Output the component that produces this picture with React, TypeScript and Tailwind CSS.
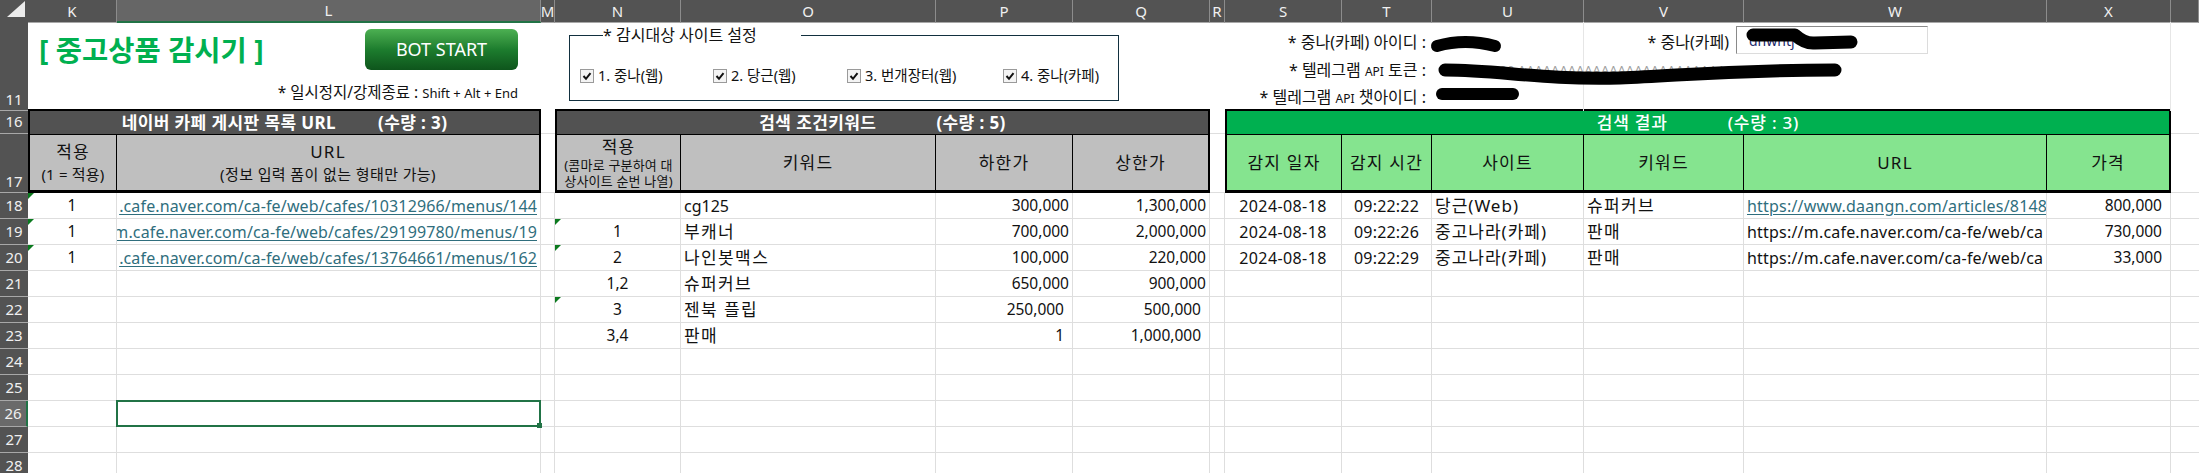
import type { ReactNode } from 'react'

const GRID =
  'grid grid-cols-[28px_89px_424px_14px_126px_255px_137px_137px_15px_117px_90px_152px_160px_303px_124px_28px]'

const COLS = ['K', 'L', 'M', 'N', 'O', 'P', 'Q', 'R', 'S', 'T', 'U', 'V', 'W', 'X', '']

const RIGHT_ROWS = [
  { n: '', kw: 'cg125', low: '300,000', high: '1,300,000', inset: false },
  { n: '1', kw: '부캐너', low: '700,000', high: '2,000,000', inset: false, mark: true },
  { n: '2', kw: '나인봇맥스', low: '100,000', high: '220,000', inset: false, mark: true },
  { n: '1,2', kw: '슈퍼커브', low: '650,000', high: '900,000', inset: false },
  { n: '3', kw: '젠북 플립', low: '250,000', high: '500,000', inset: true, mark: true },
  { n: '3,4', kw: '판매', low: '1', high: '1,000,000', inset: true },
]

// only the part the narrow columns show
const URLS = [
  '.cafe.naver.com/ca-fe/web/cafes/10312966/menus/144',
  'm.cafe.naver.com/ca-fe/web/cafes/29199780/menus/19',
  '.cafe.naver.com/ca-fe/web/cafes/13764661/menus/162',
]

const RESULTS = [
  { date: '2024-08-18', time: '09:22:22', site: '당근(Web)', kw: '슈퍼커브', url: 'https://www.daangn.com/articles/8148', price: '800,000', link: true },
  { date: '2024-08-18', time: '09:22:26', site: '중고나라(카페)', kw: '판매', url: 'https://m.cafe.naver.com/ca-fe/web/ca', price: '730,000', link: false },
  { date: '2024-08-18', time: '09:22:29', site: '중고나라(카페)', kw: '판매', url: 'https://m.cafe.naver.com/ca-fe/web/ca', price: '33,000', link: false },
]

const SITES = [
  { label: '1. 중나(웹)', width: 'w-[133px]' },
  { label: '2. 당근(웹)', width: 'w-[134px]' },
  { label: '3. 번개장터(웹)', width: 'w-[156px]' },
  { label: '4. 중나(카페)', width: 'w-[115px]' },
]

function RowHead({ label, active, bottom }: { label: string; active?: boolean; bottom?: boolean }) {
  return (
    <div
      className={`flex justify-center pb-px text-[15px] leading-5 text-[#f0f0f0] border-b border-[#a8a8a8] ${bottom ? 'items-end' : 'items-center'} ${active ? 'bg-[#6a6a6a] border-r-2 border-r-[#217346]' : 'bg-[#535353]'}`}
    >
      {label}
    </div>
  )
}

function Cell({ children, className = '' }: { children?: ReactNode; className?: string }) {
  return (
    <div className={`relative flex items-center min-w-0 overflow-hidden whitespace-nowrap border-r border-b border-[#dedede] text-[15.5px] text-[#111] ${className}`}>
      {children}
    </div>
  )
}

function Mark() {
  return <span className="absolute left-0 top-0 w-0 h-0 border-t-[6px] border-r-[6px] border-t-[#0b7a1e] border-r-transparent" />
}

function Title({ left, right, gap, className = '' }: { left: string; right: string; gap: string; className?: string }) {
  return (
    <div className={`flex items-center justify-center text-[17px] leading-[23px] text-white ${gap} ${className}`}>
      <span>{left}</span>
      <span>{right}</span>
    </div>
  )
}

function HeadCell({ children, tone, className = '' }: { children: ReactNode; tone: 'gray' | 'green'; className?: string }) {
  return (
    <div
      className={`flex flex-col items-center justify-center text-center text-[17px] tracking-[1.2px] leading-[22px] text-[#111] border-r border-black border-t border-b-[3px] border-b-black ${tone === 'gray' ? 'bg-[#bfbfbf]' : 'bg-[#85e48f]'} ${className}`}
    >
      {children}
    </div>
  )
}

function Checkbox() {
  return (
    <span className="flex items-center justify-center w-[14px] h-[14px] border border-[#9a9a9a] bg-[#f4f4f4] shrink-0">
      <svg viewBox="0 0 10 10" className="w-[10px] h-[10px]">
        <path d="M1.5 5 L4 7.8 L8.5 2.2" fill="none" stroke="#111" strokeWidth="2" />
      </svg>
    </span>
  )
}

export default function App() {
  const rows = Array.from({ length: 11 }, (_, i) => i)

  return (
    <div className="h-[473px] w-[2199px] overflow-hidden bg-white font-['Noto_Sans','Noto_Sans_CJK_KR',sans-serif]">
      {/* column letters */}
      <div className={`${GRID} h-[22px]`}>
        <div className="bg-[#535353] border-b border-[#a8a8a8] flex items-center justify-center">
          <svg viewBox="0 0 28 22" className="w-[28px] h-[22px]">
            <polygon points="7,17 25,17 25,1" fill="#ececec" />
          </svg>
        </div>
        {COLS.map((c, i) => (
          <div
            key={i}
            className={`flex items-center justify-center text-[15px] leading-none text-[#f0f0f0] border-r border-[#8c8c8c] ${c === 'L' ? 'bg-[#666666] border-b-2 border-b-[#217346]' : 'bg-[#535353] border-b border-b-[#a8a8a8]'}`}
          >
            {c}
          </div>
        ))}
      </div>

      {/* row 11: shapes and settings */}
      <div className={`${GRID} relative h-[87px]`}>
        <RowHead label="11" bottom />
        <div className="col-span-2 flex flex-col pl-[11px] pr-[23px]">
          <div className="flex items-center justify-between pt-[7px]">
            <span className="text-[28.5px] leading-[40px] font-bold text-[#00b050]">[ 중고상품 감시기 ]</span>
            <button className="w-[153px] h-[41px] rounded-[6px] bg-gradient-to-b from-[#4cb052] via-[#1d7d2e] to-[#0e551c] text-[18px] text-white">
              BOT START
            </button>
          </div>
          <div className="mt-[12px] text-right text-[15.5px] leading-5 text-[#111]">
            * 일시정지/강제종료 : <span className="text-[13px]">Shift + Alt + End</span>
          </div>
        </div>
        <div />
        <div className="col-span-4 pl-[14px] pt-[2px]">
          <fieldset className="w-[549px] h-[77px] border border-[#12303f]">
            <legend className="ml-[33px] w-[198px] text-[16px] leading-[22px] text-[#111]">* 감시대상 사이트 설정</legend>
            <div className="flex items-center pl-[10px] pt-[19px]">
              {SITES.map(site => (
                <div key={site.label} className={`flex items-center gap-[4px] text-[14.5px] text-[#111] ${site.width}`}>
                  <Checkbox />
                  <span>{site.label}</span>
                </div>
              ))}
            </div>
          </fieldset>
        </div>
        <div />
        <div className="col-span-2 flex flex-col items-end pt-[8px] pr-[6px] text-[16px] text-[#111]">
          <div className="leading-6">* 중나(카페) 아이디 :</div>
          <div className="mt-[4px] leading-6">* 텔레그램 <span className="text-[12px]">API</span> 토큰 :</div>
          <div className="mt-px leading-6">* 텔레그램 <span className="text-[12px]">API</span> 챗아이디 :</div>
        </div>
        <div className="border-r border-[#e6e6e6] pl-[8px] pt-[37px] text-[13px] leading-[22px] text-[#a0a0a0] whitespace-nowrap">
          0000000000:AAAAAAAAAAAAAAAAAAAAAAAAAAAAAAAAA
        </div>
        <div className="flex justify-end pt-[8px] pr-[15px] text-[16px] leading-6 text-[#111]">* 중나(카페)</div>
        <div className="pt-[4px]">
          <div className="-ml-[8px] w-[192px] h-[28px] border border-[#dcdcdc] border-t-[#8a8a8a] border-l-[#8a8a8a] pl-[12px] text-[14px] leading-[28px] text-[#1b2a6b] bg-white">
            dnwhtj
          </div>
        </div>
        <div className="border-r border-[#e6e6e6]" />
        <div />
        {/* hand-drawn redaction marks */}
        <svg viewBox="0 0 2199 87" className="absolute inset-0 w-[2199px] h-[87px] pointer-events-none">
          <g fill="none" stroke="#000" strokeLinecap="round" strokeLinejoin="round">
            <path d="M1437 24 Q1465 16 1495 24" strokeWidth="12" />
            <path d="M1753 13 L1795 13 Q1805 22 1815 21 L1851 20" strokeWidth="13" />
            <path d="M1445 48 C1500 48 1540 58 1620 56 C1680 54 1720 48 1835 48" strokeWidth="13" />
            <path d="M1442 72 L1513 72" strokeWidth="12" />
          </g>
        </svg>
      </div>

      {/* row 16: table titles */}
      <div className={`${GRID} h-[25px]`}>
        <RowHead label="16" />
        <div className="col-span-2 bg-[#525252] border-t-2 border-x-2 border-black">
          <Title left="네이버 카페 게시판 목록 URL" right="(수량 : 3)" gap="gap-[42px]" className="font-bold tracking-[0.4px]" />
        </div>
        <div className="border-b border-[#dedede]" />
        <div className="col-span-4 bg-[#525252] border-t-2 border-x-2 border-black">
          <Title left="검색 조건키워드" right="(수량 : 5)" gap="gap-[60px]" className="font-bold tracking-[0.4px]" />
        </div>
        <div className="border-b border-[#dedede]" />
        <div className="col-span-6 bg-[#00b050] border-t-2 border-x-2 border-black">
          <Title left="검색 결과" right="(수량 : 3)" gap="gap-[60px]" className="font-medium tracking-[0.8px]" />
        </div>
        <div className="border-b border-[#dedede]" />
      </div>

      {/* row 17: column captions */}
      <div className={`${GRID} h-[59px]`}>
        <RowHead label="17" bottom />
        <HeadCell tone="gray" className="border-l-2">
          <span>적용</span>
          <span className="text-[15px] tracking-[0.2px] leading-[22px]">(1 = 적용)</span>
        </HeadCell>
        <HeadCell tone="gray" className="border-r-2">
          <span>URL</span>
          <span className="text-[15px] tracking-[0.4px] leading-[22px]">(정보 입력 폼이 없는 형태만 가능)</span>
        </HeadCell>
        <div className="border-b border-[#dedede]" />
        <HeadCell tone="gray" className="border-l-2">
          <span className="leading-5">적용</span>
          <span className="text-[13px] tracking-[0.2px] leading-4 whitespace-nowrap">(콤마로 구분하여 대<br />상사이트 순번 나열)</span>
        </HeadCell>
        <HeadCell tone="gray">키워드</HeadCell>
        <HeadCell tone="gray">하한가</HeadCell>
        <HeadCell tone="gray" className="border-r-2">상한가</HeadCell>
        <div className="border-b border-[#dedede]" />
        <HeadCell tone="green" className="border-l-2">감지 일자</HeadCell>
        <HeadCell tone="green">감지 시간</HeadCell>
        <HeadCell tone="green">사이트</HeadCell>
        <HeadCell tone="green">키워드</HeadCell>
        <HeadCell tone="green">URL</HeadCell>
        <HeadCell tone="green" className="border-r-2">가격</HeadCell>
        <div className="border-b border-[#dedede]" />
      </div>

      {/* rows 18-28 */}
      {rows.map(i => {
        const url = URLS[i]
        const right = RIGHT_ROWS[i]
        const res = RESULTS[i]
        return (
          <div key={i} className={`${GRID} h-[26px]`}>
            <RowHead label={String(18 + i)} active={i === 8} />
            <Cell className="justify-center">
              {url && <Mark />}
              {url && '1'}
            </Cell>
            <Cell className={`justify-end pr-[3px] ${i === 8 ? 'overflow-visible z-10' : ''}`}>
              {url && <span className="text-[16px] tracking-[0.14px] text-[#2f6e7d] underline underline-offset-2">{url}</span>}
              {i === 8 && (
                <>
                  <span className="absolute -inset-px border-2 border-[#217346]" />
                  <span className="absolute -right-[2px] -bottom-[2px] w-[5px] h-[5px] bg-[#217346]" />
                </>
              )}
            </Cell>
            <Cell />
            <Cell className="justify-center">
              {right?.mark && <Mark />}
              {right?.n}
            </Cell>
            <Cell className={`pl-[3px] ${i === 0 ? 'text-[16px]' : 'text-[17px] tracking-[1.4px]'}`}>{right?.kw}</Cell>
            <Cell className={`justify-end ${right?.inset ? 'pr-[8px]' : 'pr-[3px]'}`}>{right?.low}</Cell>
            <Cell className={`justify-end ${right?.inset ? 'pr-[8px]' : 'pr-[3px]'}`}>{right?.high}</Cell>
            <Cell />
            <Cell className="justify-center text-[16px] tracking-[0.4px]">{res?.date}</Cell>
            <Cell className="justify-center text-[16px] tracking-[0.2px]">{res?.time}</Cell>
            <Cell className="pl-[3px] text-[17px] tracking-[1px]">{res?.site}</Cell>
            <Cell className="pl-[3px] text-[17px] tracking-[1.4px]">{res?.kw}</Cell>
            <Cell className="pl-[3px] text-[16px] tracking-[0.2px]">
              {res && <span className={res.link ? 'text-[#2f6e7d] underline underline-offset-2' : ''}>{res.url}</span>}
            </Cell>
            <Cell className="justify-end pr-[8px]">{res?.price}</Cell>
            <Cell className="border-r-0" />
          </div>
        )
      })}
    </div>
  )
}
